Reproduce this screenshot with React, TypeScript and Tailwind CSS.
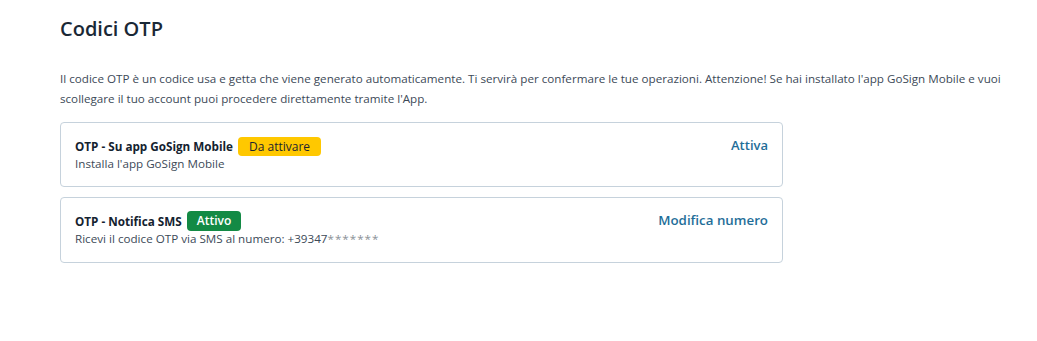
export default function App() {
  return (
    <div className="min-h-screen bg-white px-[60px] pt-[15px] text-[#1c2b39]" style={{ fontFamily: '"Open Sans", "Noto Sans", sans-serif' }}>
      <h1 className="text-[20px] font-semibold leading-[27px] text-[#1a2836]">Codici OTP</h1>
      <p className="mt-[27px] w-[960px] text-[11.65px] leading-[20px] text-[#3c4957]">
        Il codice OTP è un codice usa e getta che viene generato automaticamente. Ti servirà per confermare le tue operazioni. Attenzione! Se hai installato l'app GoSign Mobile e vuoi scollegare il tuo account puoi procedere direttamente tramite l'App.
      </p>
      <div className="mt-[13px] flex w-[723px] flex-col gap-[10px]">
        <div className="flex items-start justify-between rounded-[4px] border border-[#c6d2dc] px-[14px] pt-[13px] pb-[14px]">
          <div className="flex flex-col">
            <div className="flex items-center gap-[5px]">
              <span className="text-[11.7px] font-bold leading-[20px] text-[#14222f]">OTP - Su app GoSign Mobile</span>
              <span className="rounded-[4px] bg-[#ffc800] px-[11px] text-[12px] leading-[19px] text-[#1c2430]">Da attivare</span>
            </div>
            <span className="text-[11.65px] leading-[16px] text-[#3c4957]">Installa l'app GoSign Mobile</span>
          </div>
          <span className="-mt-[1px] text-[13px] font-semibold leading-[20px] text-[#1f6e99]">Attiva</span>
        </div>
        <div className="flex items-start justify-between rounded-[4px] border border-[#c6d2dc] px-[14px] pt-[13px] pb-[15px]">
          <div className="flex flex-col">
            <div className="flex items-center gap-[5px]">
              <span className="text-[11.7px] font-bold leading-[20px] text-[#14222f]">OTP - Notifica SMS</span>
              <span className="rounded-[4px] bg-[#138a45] px-[10px] text-[12px] font-semibold leading-[20px] text-white">Attivo</span>
            </div>
            <span className="text-[11.65px] leading-[16px] text-[#3c4957]">
              Ricevi il codice OTP via SMS al numero: +39347
              <span className="tracking-[1px] text-[#8a9096]">*******</span>
            </span>
          </div>
          <span className="-mt-[1px] text-[13.3px] font-semibold leading-[20px] text-[#1f6e99]">Modifica numero</span>
        </div>
      </div>
    </div>
  );
}
